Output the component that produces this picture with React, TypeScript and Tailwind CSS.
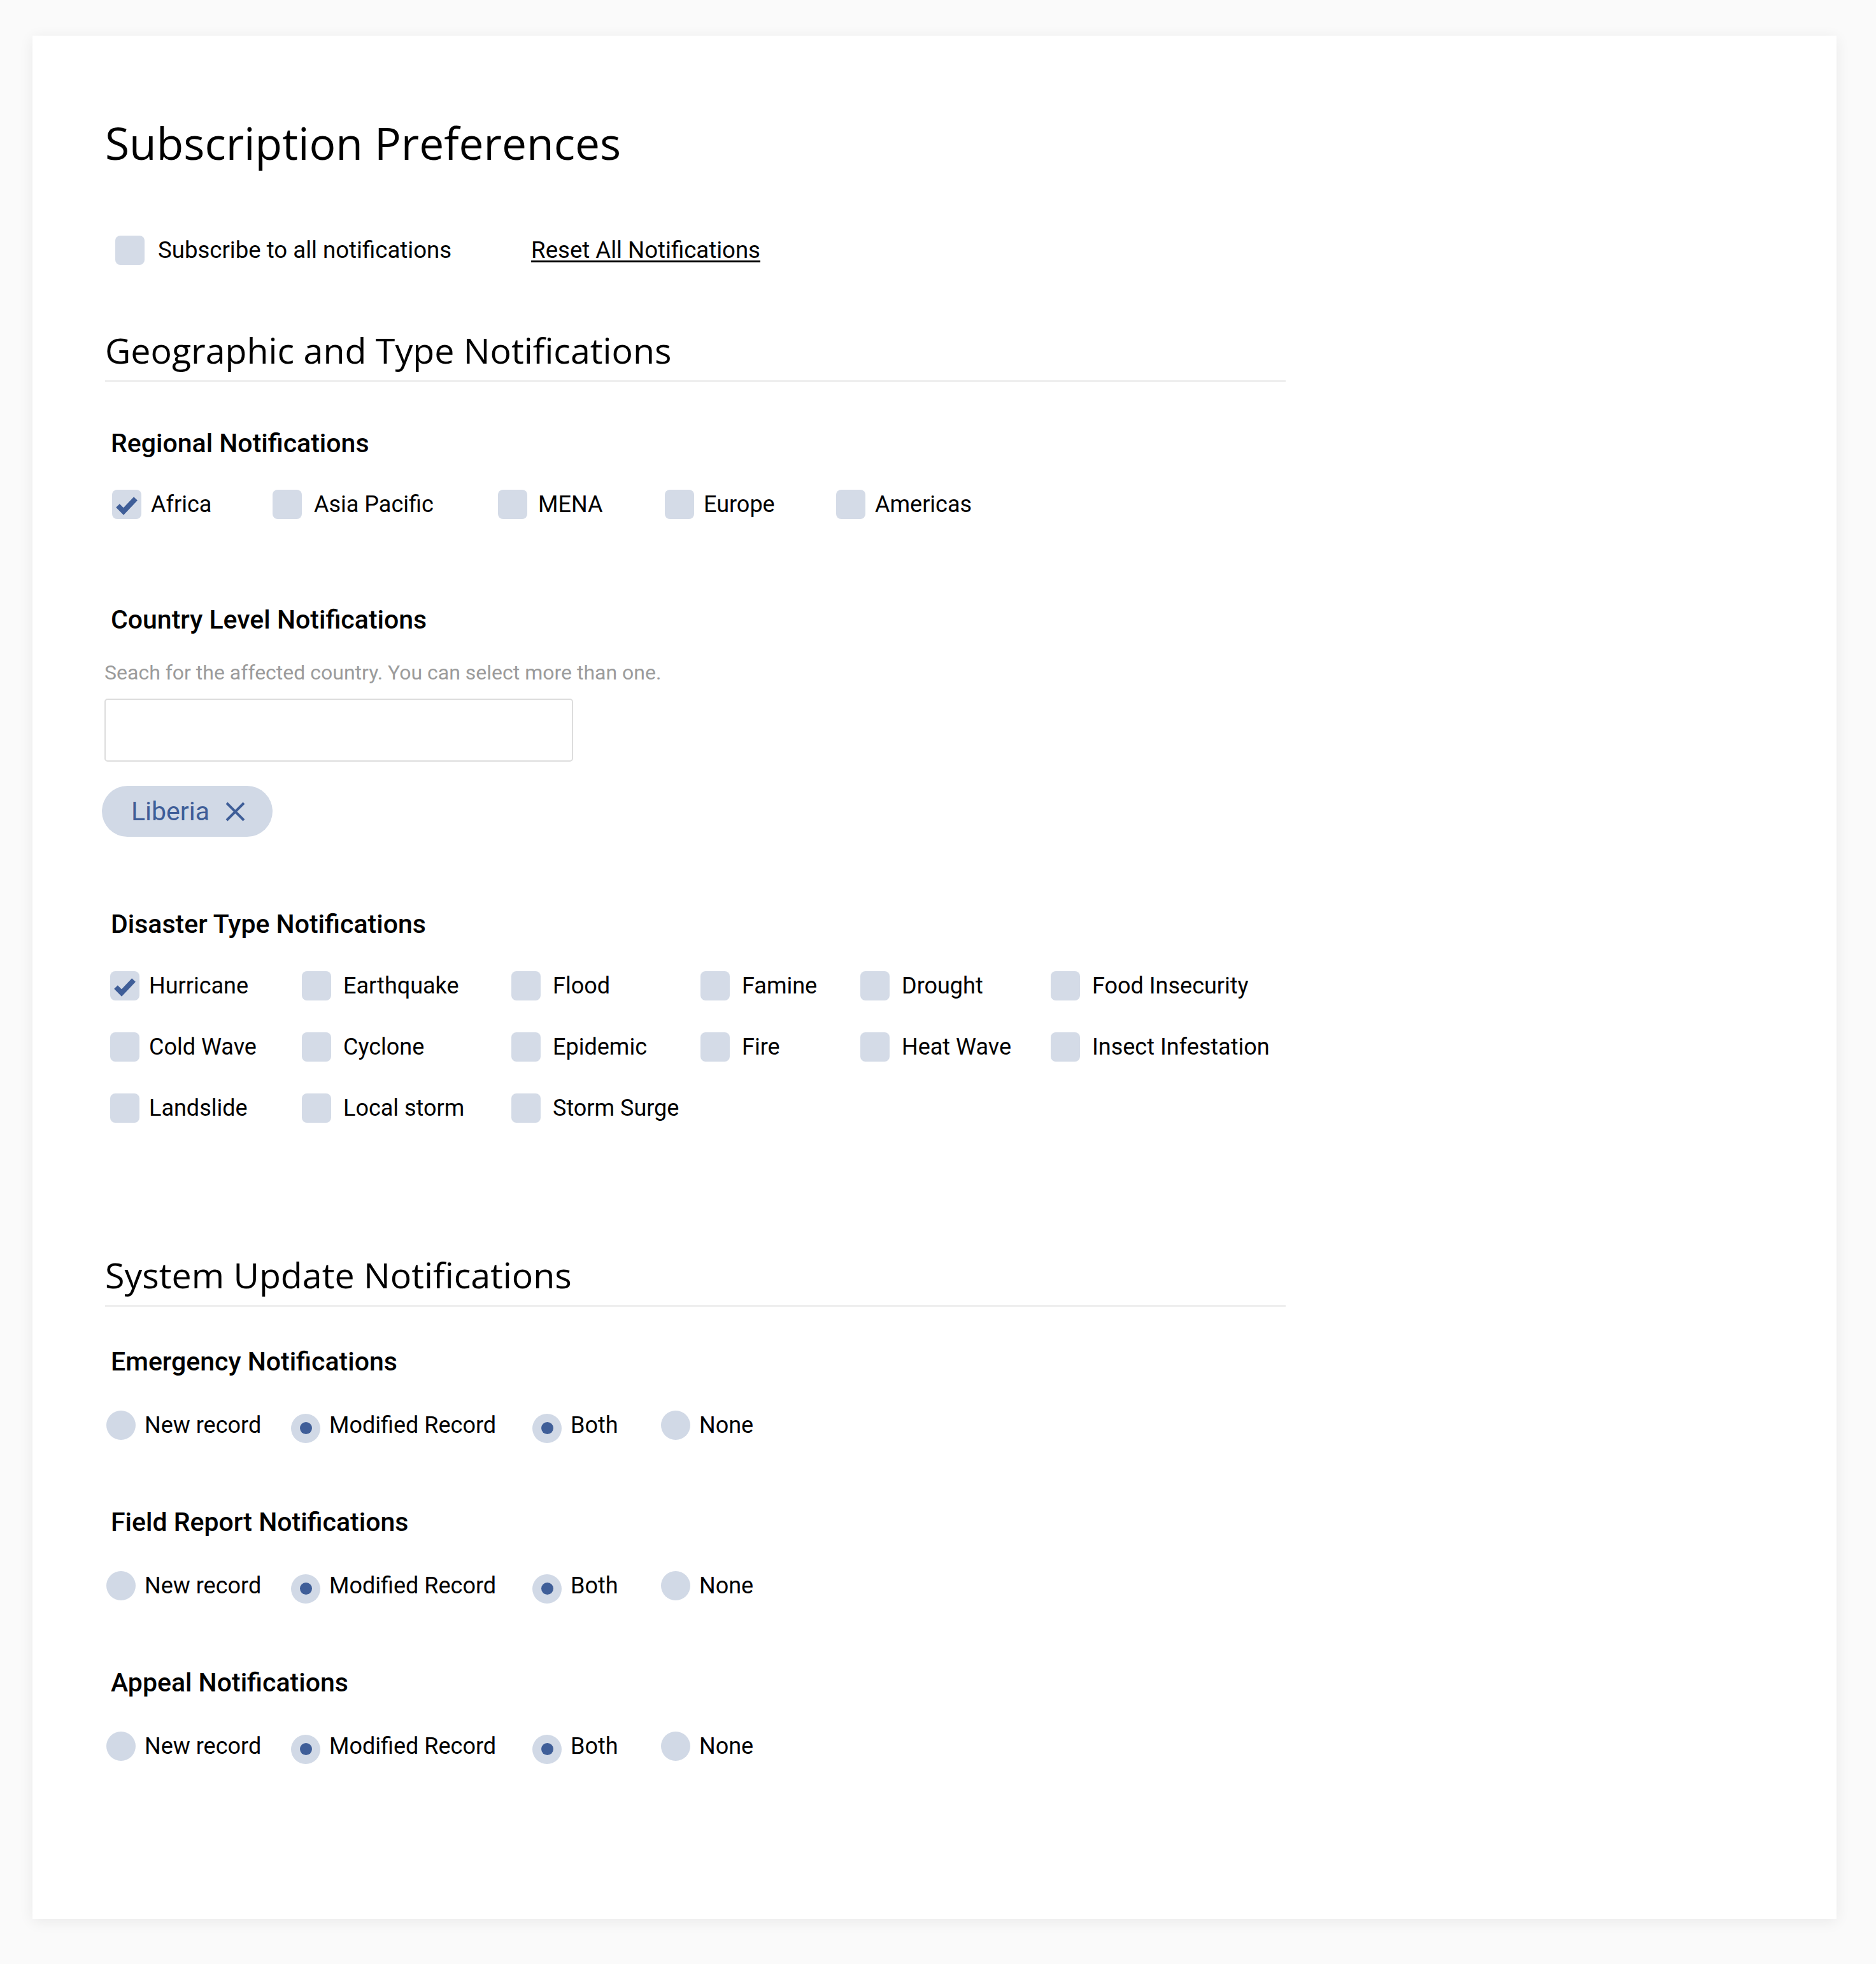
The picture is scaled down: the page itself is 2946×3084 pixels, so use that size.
const body = { fontFamily: "Roboto, 'Liberation Sans', sans-serif" }
const display = { fontFamily: "'Open Sans', 'Liberation Sans', sans-serif" }

function Box({ checked }: { checked?: boolean }) {
  return (
    <span className="flex h-[46px] w-[46px] shrink-0 items-center justify-center rounded-[8px] bg-[#d4dbe7]">
      {checked && (
        <svg width="46" height="46" viewBox="0 0 46 46">
          <polyline
            points="9,25 18,34 37,14"
            fill="none"
            stroke="#3f5e98"
            strokeWidth="8"
            strokeLinejoin="miter"
          />
        </svg>
      )}
    </span>
  )
}

function Check({
  label,
  checked,
  className,
}: {
  label: string
  checked?: boolean
  className?: string
}) {
  return (
    <div className={"flex h-[46px] items-center " + (className ?? "gap-[15px]")}>
      <Box checked={checked} />
      <span className="whitespace-nowrap text-[36px] leading-[46px] text-black">{label}</span>
    </div>
  )
}

function Radio({ label, checked, className }: { label: string; checked?: boolean; className?: string }) {
  return (
    <div className={"flex h-[46px] items-center gap-[14px] " + (className ?? "")}>
      <span
        className={
          "flex h-[46px] w-[46px] shrink-0 items-center justify-center rounded-full bg-[#d1d9e6] " +
          (checked ? "mt-[9px]" : "")
        }
      >
        {checked && <span className="h-[19px] w-[19px] rounded-full bg-[#3f5e98]" />}
      </span>
      <span className="whitespace-nowrap text-[36px] leading-[46px] text-black">{label}</span>
    </div>
  )
}

function SubHeading({ children, className }: { children: string; className?: string }) {
  return (
    <h3 className={"ml-[9px] text-[41px] font-medium leading-[48px] text-black " + (className ?? "")}>
      {children}
    </h3>
  )
}

function RadioRow() {
  return (
    <div className="mt-[53px] flex pl-[2px]">
      <Radio label="New record" className="w-[290px]" />
      <Radio label="Modified Record" checked className="w-[379px]" />
      <Radio label="Both" checked className="w-[202px]" />
      <Radio label="None" />
    </div>
  )
}

const disasters: [string, boolean][] = [
  ["Hurricane", true],
  ["Earthquake", false],
  ["Flood", false],
  ["Famine", false],
  ["Drought", false],
  ["Food Insecurity", false],
  ["Cold Wave", false],
  ["Cyclone", false],
  ["Epidemic", false],
  ["Fire", false],
  ["Heat Wave", false],
  ["Insect Infestation", false],
  ["Landslide", false],
  ["Local storm", false],
  ["Storm Surge", false],
]

export default function App() {
  return (
    <div className="min-h-screen bg-[#fafafa] pb-[71px] pl-[51px] pt-[56px]" style={body}>
      <div className="w-[2833px] bg-white pb-[248px] pl-[114px] pt-[128px] shadow-[0_4px_22px_rgba(0,0,0,0.07)]">
        <h1 className="text-[69.5px] font-normal leading-[80px] text-black" style={display}>
          Subscription Preferences
        </h1>

        <div className="mt-[106px] flex h-[46px] items-center pl-[16px]">
          <Box />
          <span className="ml-[21px] text-[36.6px] leading-[46px] text-black">Subscribe to all notifications</span>
          <a
            href="#"
            className="ml-[125px] text-[36.6px] leading-[46px] text-black underline decoration-[3px] underline-offset-[4px]"
          >
            Reset All Notifications
          </a>
        </div>

        <div className="w-[1854px]">
          <h2
            className="mt-[102px] border-b-[3px] border-[#eeeeee] pb-[15px] text-[55.5px] font-normal leading-[64px] text-black"
            style={display}
          >
            Geographic and Type Notifications
          </h2>

          <SubHeading className="mt-[72px]">Regional Notifications</SubHeading>
          <div className="mt-[49px] flex pl-[11px]">
            <Check label="Africa" checked className="w-[252px] gap-[15px]" />
            <Check label="Asia Pacific" className="w-[354px] gap-[19px]" />
            <Check label="MENA" className="w-[262px] gap-[17px]" />
            <Check label="Europe" className="w-[269px] gap-[15px]" />
            <Check label="Americas" className="gap-[15px]" />
          </div>

          <SubHeading className="mt-[134px]">Country Level Notifications</SubHeading>
          <p className="-ml-[1px] mt-[39px] text-[32px] leading-[40px] text-[#9b9b9b]">
            Seach for the affected country. You can select more than one.
          </p>
          <div className="-ml-[1px] mt-[21px] h-[99px] w-[736px] rounded-[5px] border-2 border-[#dddddd] bg-white" />
          <div className="-ml-[5px] mt-[38px] flex h-[80px] w-[268px] items-center rounded-full bg-[#d1d9e6] pl-[46px]">
            <span className="text-[41px] leading-[48px] text-[#3f5e98]">Liberia</span>
            <svg className="ml-[24px]" width="33" height="33" viewBox="0 0 33 33">
              <path d="M3 3 L30 30 M30 3 L3 30" stroke="#3f5e98" strokeWidth="4" fill="none" />
            </svg>
          </div>

          <SubHeading className="mt-[113px]">Disaster Type Notifications</SubHeading>
          <div className="mt-[50px] grid grid-cols-[301px_329px_297px_251px_299px_auto] gap-y-[50px] pl-[8px]">
            {disasters.map(([label, checked], i) => (
              <Check
                key={label}
                label={label}
                checked={checked}
                className={i % 6 === 0 ? "gap-[15px]" : "gap-[19px]"}
              />
            ))}
          </div>

          <h2
            className="mt-[207px] border-b-[3px] border-[#eeeeee] pb-[15px] text-[55.5px] font-normal leading-[64px] text-black"
            style={display}
          >
            System Update Notifications
          </h2>

          <SubHeading className="mt-[62px]">Emergency Notifications</SubHeading>
          <RadioRow />

          <SubHeading className="mt-[105px]">Field Report Notifications</SubHeading>
          <RadioRow />

          <SubHeading className="mt-[105px]">Appeal Notifications</SubHeading>
          <RadioRow />
        </div>
      </div>
    </div>
  )
}
